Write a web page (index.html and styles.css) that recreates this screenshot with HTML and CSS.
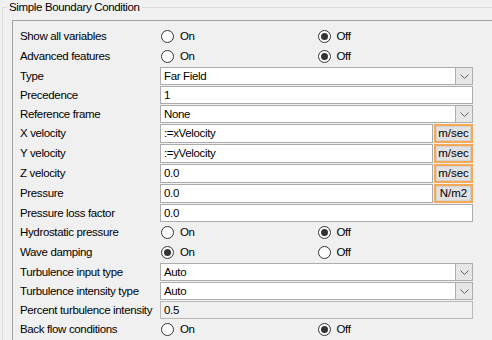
FILE: index.html
```html
<!DOCTYPE html>
<html>
<head>
<meta charset="utf-8">
<link rel="stylesheet" href="styles.css">
</head>
<body>
<fieldset class="group">
  <legend class="group-title">Simple Boundary Condition</legend>
  <div class="panel">
    <div class="row tall"><span class="label">Show all variables</span>
      <div class="radios"><span class="radio"><span class="circle"></span>On</span><span class="radio"><span class="circle checked"></span>Off</span></div></div>
    <div class="row tall"><span class="label">Advanced features</span>
      <div class="radios"><span class="radio"><span class="circle"></span>On</span><span class="radio"><span class="circle checked"></span>Off</span></div></div>
    <div class="row"><span class="label">Type</span>
      <div class="combo"><span class="value">Far Field</span><span class="drop"><svg width="9" height="5" viewBox="0 0 9 5"><path d="M0.5 0.5 L4.5 4.5 L8.5 0.5" fill="none" stroke="#606060" stroke-width="1"/></svg></span></div></div>
    <div class="row"><span class="label">Precedence</span>
      <div class="field">1</div></div>
    <div class="row"><span class="label">Reference frame</span>
      <div class="combo"><span class="value">None</span><span class="drop"><svg width="9" height="5" viewBox="0 0 9 5"><path d="M0.5 0.5 L4.5 4.5 L8.5 0.5" fill="none" stroke="#606060" stroke-width="1"/></svg></span></div></div>
    <div class="row tall"><span class="label">X velocity</span>
      <div class="unit-field"><div class="field">:=xVelocity</div><span class="unit">m/sec</span></div></div>
    <div class="row tall"><span class="label">Y velocity</span>
      <div class="unit-field"><div class="field">:=yVelocity</div><span class="unit">m/sec</span></div></div>
    <div class="row tall"><span class="label">Z velocity</span>
      <div class="unit-field"><div class="field">0.0</div><span class="unit">m/sec</span></div></div>
    <div class="row tall"><span class="label">Pressure</span>
      <div class="unit-field"><div class="field">0.0</div><span class="unit">N/m2</span></div></div>
    <div class="row"><span class="label">Pressure loss factor</span>
      <div class="field">0.0</div></div>
    <div class="row tall"><span class="label">Hydrostatic pressure</span>
      <div class="radios"><span class="radio"><span class="circle"></span>On</span><span class="radio"><span class="circle checked"></span>Off</span></div></div>
    <div class="row tall"><span class="label">Wave damping</span>
      <div class="radios"><span class="radio"><span class="circle checked"></span>On</span><span class="radio"><span class="circle"></span>Off</span></div></div>
    <div class="row"><span class="label">Turbulence input type</span>
      <div class="combo"><span class="value">Auto</span><span class="drop"><svg width="9" height="5" viewBox="0 0 9 5"><path d="M0.5 0.5 L4.5 4.5 L8.5 0.5" fill="none" stroke="#606060" stroke-width="1"/></svg></span></div></div>
    <div class="row"><span class="label">Turbulence intensity type</span>
      <div class="combo"><span class="value">Auto</span><span class="drop"><svg width="9" height="5" viewBox="0 0 9 5"><path d="M0.5 0.5 L4.5 4.5 L8.5 0.5" fill="none" stroke="#606060" stroke-width="1"/></svg></span></div></div>
    <div class="row"><span class="label">Percent turbulence intensity</span>
      <div class="field readonly">0.5</div></div>
    <div class="row tall"><span class="label">Back flow conditions</span>
      <div class="radios"><span class="radio"><span class="circle"></span>On</span><span class="radio"><span class="circle checked"></span>Off</span></div></div>
  </div>
</fieldset>
</body>
</html>
```
FILE: styles.css
```css
html, body {
  margin: 0;
  padding: 0;
  background: #f0f0f0;
  overflow: hidden;
}
body {
  font-family: "Segoe UI", "Liberation Sans", Arial, sans-serif;
  font-size: 11.5px;
  letter-spacing: -0.35px;
  color: #000;
  width: 492px;
  height: 340px;
}
.group {
  margin: 0 0 0 2px;
  padding: 0 0 0 9px;
  border: 1px solid #dcdcdc;
  border-right: none;
  border-bottom: none;
  min-width: 0;
  height: 340px;
  box-sizing: border-box;
}
.group-title {
  padding: 0 2px;
  margin-left: -5px;
  line-height: 14px;
  height: 14px;
}
.panel {
  margin-top: 6px;
  width: 467px;
  border-top: 1px solid #a0a0a0;
  border-left: 1px solid #a0a0a0;
  border-right: 1px solid #ffffff;
  padding: 5px 7px 0 7px;
  height: 319px;
  overflow: hidden;
}
.row {
  display: grid;
  grid-template-columns: 140px 313px;
  height: 19px;
  align-items: start;
}
.row.tall {
  height: 20px;
}
.label {
  white-space: nowrap;
  line-height: 20px;
}
.radios {
  display: flex;
  align-items: center;
  height: 20px;
}
.radio {
  display: flex;
  align-items: center;
  width: 157px;
  gap: 6px;
}
.circle {
  box-sizing: border-box;
  width: 13px;
  height: 13px;
  margin-left: 1px;
  border: 1px solid #333333;
  border-radius: 50%;
  background: #ffffff;
  display: flex;
  align-items: center;
  justify-content: center;
}
.circle.checked::after {
  content: "";
  width: 7px;
  height: 7px;
  border-radius: 50%;
  background: #333333;
}
.field, .combo {
  box-sizing: border-box;
  height: 18px;
  margin-top: 1px;
  background: #ffffff;
  border: 1px solid #ababab;
  padding: 0 3px;
  line-height: 16px;
  white-space: nowrap;
}
.unit-field .field {
  height: 19px;
  line-height: 17px;
  flex: 1;
}
.field.readonly {
  background: #f0f0f0;
  border-color: #b9b9b9;
}
.combo {
  display: flex;
  align-items: stretch;
  padding: 0 0 0 3px;
  border-color: #adadad;
}
.combo .value {
  flex: 1;
}
.drop {
  width: 16px;
  background: #e6e6e6;
  border-left: 1px solid #adadad;
  display: flex;
  align-items: center;
  justify-content: center;
}
.unit-field {
  display: flex;
  gap: 1px;
  margin-top: 1px;
}
.unit-field .field {
  margin-top: 0;
}
.unit {
  box-sizing: border-box;
  width: 39px;
  height: 19px;
  border: 2px solid #f6a955;
  background: #e1e1e1;
  box-shadow: inset 0 0 0 1px #d2d2d2;
  text-align: center;
  line-height: 15px;
  letter-spacing: 0;
}
```
